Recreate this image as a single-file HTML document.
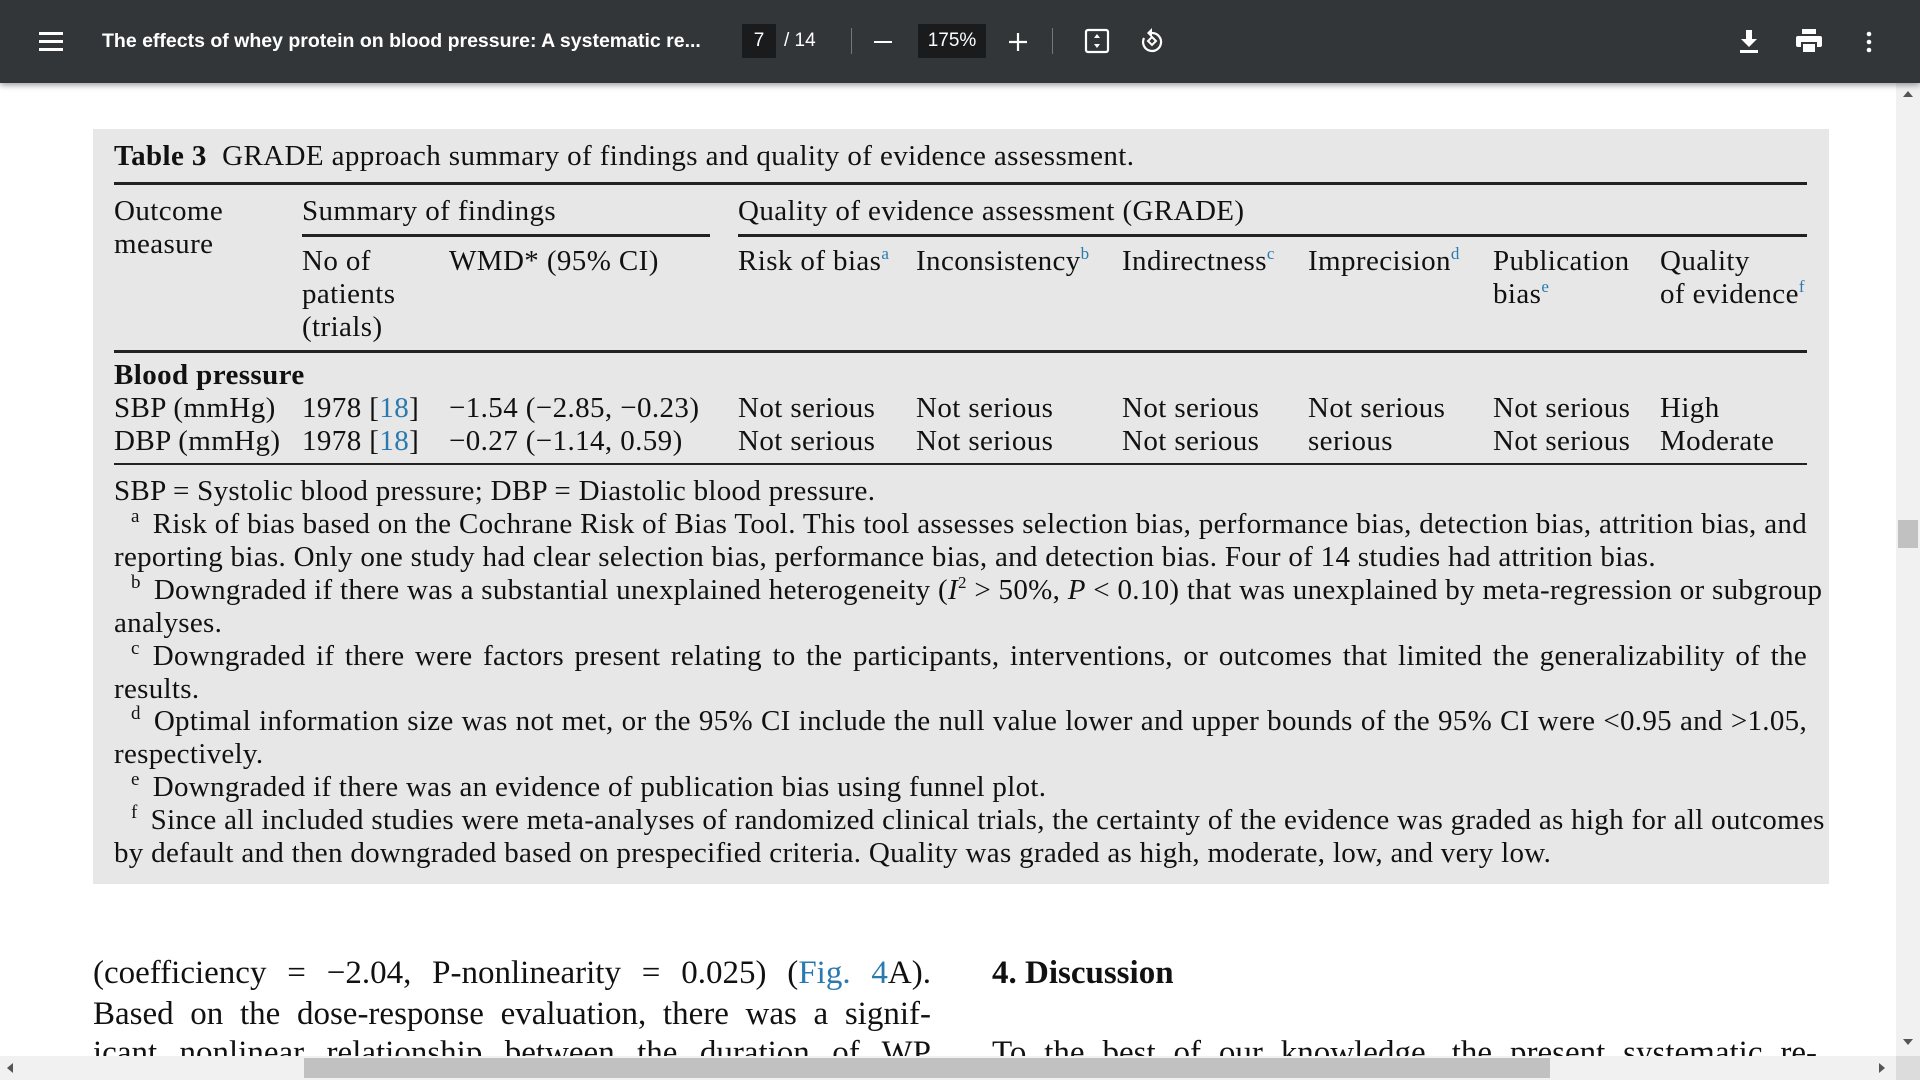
<!DOCTYPE html>
<html><head><meta charset="utf-8"><style>
*{margin:0;padding:0;box-sizing:border-box}
body{width:1920px;height:1080px;overflow:hidden;background:#fff;position:relative;font-family:"Liberation Serif",serif;color:#111}
.tb{position:absolute;left:0;top:0;width:1920px;height:83px;background:#323639;box-shadow:0 2px 6px rgba(0,0,0,.4);z-index:5;font-family:"Liberation Sans",sans-serif;color:#fff}
.a{position:absolute;white-space:nowrap}
.box{position:absolute;left:93px;top:129px;width:1736px;height:755px;background:#e7e7e7}
.t{position:absolute;font-size:29px;line-height:33px;letter-spacing:0.4px;white-space:nowrap}
.hl{position:absolute;height:3px;background:#222}
.bl{color:#2a7ab0}
sup{font-size:17px;vertical-align:11px;line-height:0}
.j{position:absolute;left:114px;width:1693px;font-size:29px;line-height:33px;letter-spacing:0.3px;text-align:justify;text-align-last:justify;white-space:nowrap}
.n{text-align-last:left}
.fn{font-size:19px;vertical-align:11px;line-height:0;margin-left:17px;margin-right:13px}
.big{position:absolute;font-size:33px;line-height:40px;white-space:nowrap}
</style></head><body>
<div class="tb">
 <svg class="a" style="left:39px;top:31px" width="24" height="20"><rect y="1" width="24" height="3" fill="#fff"/><rect y="9" width="24" height="3" fill="#fff"/><rect y="17" width="24" height="3" fill="#fff"/></svg>
 <div class="a" style="left:102px;top:30px;font-size:19.5px;font-weight:bold">The effects of whey protein on blood pressure: A systematic re...</div>
 <div class="a" style="left:742px;top:24px;width:34px;height:34px;background:#191b1c;font-size:19px;line-height:34px;text-align:center">7</div>
 <div class="a" style="left:784px;top:30px;font-size:19px">/ 14</div>
 <div class="a" style="left:851px;top:28px;width:1px;height:26px;background:#777"></div>
 <div class="a" style="left:874px;top:41px;width:18px;height:2px;background:#fff"></div>
 <div class="a" style="left:918px;top:24px;width:68px;height:34px;background:#191b1c;font-size:19px;line-height:34px;text-align:center">175%</div>
 <svg class="a" style="left:1008px;top:32px" width="20" height="20"><path d="M10 1v18M1 10h18" stroke="#fff" stroke-width="2.2"/></svg>
 <div class="a" style="left:1052px;top:28px;width:1px;height:26px;background:#777"></div>
 <svg class="a" style="left:1084px;top:28px" width="26" height="26"><rect x="2" y="2" width="22" height="22" rx="2" fill="none" stroke="#fff" stroke-width="2.2"/><path d="M13 6l-3 4h6zM13 20l-3-4h6z" fill="#fff"/></svg>
 <svg class="a" style="left:1138px;top:27px" width="28" height="28"><path d="M14 6a9 9 0 1 1-8 5" fill="none" stroke="#fff" stroke-width="2.2"/><path d="M14 1v10l-5-5z" fill="#fff"/><path d="M14 10l4 4-4 4-4-4z" fill="none" stroke="#fff" stroke-width="2"/></svg>
 <svg class="a" style="left:1738px;top:30px" width="22" height="24"><path d="M8 0h6v9h5l-8 8-8-8h5z" fill="#fff"/><rect x="2" y="20" width="18" height="3" fill="#fff"/></svg>
 <svg class="a" style="left:1796px;top:29px" width="26" height="24"><rect x="6" y="0" width="14" height="5" fill="#fff"/><rect x="0" y="7" width="26" height="11" rx="2" fill="#fff"/><rect x="6" y="14" width="14" height="10" fill="#fff" stroke="#323639" stroke-width="2"/></svg>
 <svg class="a" style="left:1865px;top:31px" width="8" height="22"><circle cx="4" cy="3" r="2.3" fill="#fff"/><circle cx="4" cy="11" r="2.3" fill="#fff"/><circle cx="4" cy="19" r="2.3" fill="#fff"/></svg>
</div>

<div class="box"></div>
<div class="t" style="left:114px;top:140px"><b>Table 3</b>&nbsp;&nbsp;GRADE approach summary of findings and quality of evidence assessment.</div>
<div class="hl" style="left:114px;top:182px;width:1693px"></div>
<div class="t" style="left:114px;top:195px">Outcome<br>measure</div>
<div class="t" style="left:302px;top:195px">Summary of findings</div>
<div class="t" style="left:738px;top:195px">Quality of evidence assessment (GRADE)</div>
<div class="hl" style="left:302px;top:234px;width:408px"></div>
<div class="hl" style="left:738px;top:234px;width:1069px"></div>
<div class="t" style="left:302px;top:245px">No of<br>patients<br>(trials)</div>
<div class="t" style="left:449px;top:245px">WMD* (95% CI)</div>
<div class="t" style="left:738px;top:245px">Risk of bias<sup class="bl">a</sup></div>
<div class="t" style="left:916px;top:245px">Inconsistency<sup class="bl">b</sup></div>
<div class="t" style="left:1122px;top:245px">Indirectness<sup class="bl">c</sup></div>
<div class="t" style="left:1308px;top:245px">Imprecision<sup class="bl">d</sup></div>
<div class="t" style="left:1493px;top:245px">Publication<br>bias<sup class="bl">e</sup></div>
<div class="t" style="left:1660px;top:245px">Quality<br>of evidence<sup class="bl">f</sup></div>
<div class="hl" style="left:114px;top:350px;width:1693px"></div>
<div class="t" style="left:114px;top:359px"><b>Blood pressure</b></div>
<div class="t" style="left:114px;top:392px">SBP (mmHg)<br>DBP (mmHg)</div>
<div class="t" style="left:302px;top:392px">1978 [<span class="bl">18</span>]<br>1978 [<span class="bl">18</span>]</div>
<div class="t" style="left:449px;top:392px">&minus;1.54 (&minus;2.85, &minus;0.23)<br>&minus;0.27 (&minus;1.14, 0.59)</div>
<div class="t" style="left:738px;top:392px">Not serious<br>Not serious</div>
<div class="t" style="left:916px;top:392px">Not serious<br>Not serious</div>
<div class="t" style="left:1122px;top:392px">Not serious<br>Not serious</div>
<div class="t" style="left:1308px;top:392px">Not serious<br>serious</div>
<div class="t" style="left:1493px;top:392px">Not serious<br>Not serious</div>
<div class="t" style="left:1660px;top:392px">High<br>Moderate</div>
<div class="hl" style="left:114px;top:463px;width:1693px;height:2px"></div>

<div class="j n" style="top:475px">SBP = Systolic blood pressure; DBP = Diastolic blood pressure.</div>
<div class="j" style="top:508px"><span class="fn">a</span>Risk of bias based on the Cochrane Risk of Bias Tool. This tool assesses selection bias, performance bias, detection bias, attrition bias, and</div>
<div class="j n" style="top:541px">reporting bias. Only one study had clear selection bias, performance bias, and detection bias. Four of 14 studies had attrition bias.</div>
<div class="j" style="top:574px"><span class="fn">b</span>Downgraded if there was a substantial unexplained heterogeneity (<i>I</i><sup>2</sup> &gt; 50%, <i>P</i> &lt; 0.10) that was unexplained by meta-regression or subgroup</div>
<div class="j n" style="top:607px">analyses.</div>
<div class="j" style="top:640px"><span class="fn">c</span>Downgraded if there were factors present relating to the participants, interventions, or outcomes that limited the generalizability of the</div>
<div class="j n" style="top:673px">results.</div>
<div class="j" style="top:705px"><span class="fn">d</span>Optimal information size was not met, or the 95% CI include the null value lower and upper bounds of the 95% CI were &lt;0.95 and &gt;1.05,</div>
<div class="j n" style="top:738px">respectively.</div>
<div class="j n" style="top:771px"><span class="fn">e</span>Downgraded if there was an evidence of publication bias using funnel plot.</div>
<div class="j" style="top:804px"><span class="fn">f</span>Since all included studies were meta-analyses of randomized clinical trials, the certainty of the evidence was graded as high for all outcomes</div>
<div class="j n" style="top:837px">by default and then downgraded based on prespecified criteria. Quality was graded as high, moderate, low, and very low.</div>

<div class="big" style="left:93px;top:953px;width:838px;text-align:justify;text-align-last:justify">(coefficiency = &minus;2.04, P-nonlinearity = 0.025) (<span class="bl">Fig. 4</span>A).</div>
<div class="big" style="left:93px;top:994px;width:838px;text-align:justify;text-align-last:justify">Based on the dose-response evaluation, there was a signif-</div>
<div class="big" style="left:93px;top:1033px;width:838px;text-align:justify;text-align-last:justify">icant nonlinear relationship between the duration of WP</div>
<div class="big" style="left:992px;top:953px"><b>4. Discussion</b></div>
<div class="big" style="left:992px;top:1033px;width:825px;text-align:justify;text-align-last:justify">To the best of our knowledge, the present systematic re-</div>

<div class="a" style="left:1896px;top:83px;width:24px;height:973px;background:#f1f1f1"></div>
<div class="a" style="left:1898px;top:520px;width:20px;height:28px;background:#c1c1c1"></div>
<svg class="a" style="left:1902px;top:90px" width="12" height="8"><path d="M6 1l5 6H1z" fill="#555"/></svg>
<svg class="a" style="left:1902px;top:1038px" width="12" height="8"><path d="M6 7l5-6H1z" fill="#555"/></svg>
<div class="a" style="left:0;top:1056px;width:1896px;height:24px;background:#f1f1f1"></div>
<div class="a" style="left:304px;top:1058px;width:1246px;height:20px;background:#c1c1c1"></div>
<div class="a" style="left:1896px;top:1056px;width:24px;height:24px;background:#dcdcdc"></div>
<svg class="a" style="left:6px;top:1062px" width="8" height="12"><path d="M1 6l6-5v10z" fill="#555"/></svg>
<svg class="a" style="left:1878px;top:1062px" width="8" height="12"><path d="M7 6L1 1v10z" fill="#555"/></svg>
</body></html>
